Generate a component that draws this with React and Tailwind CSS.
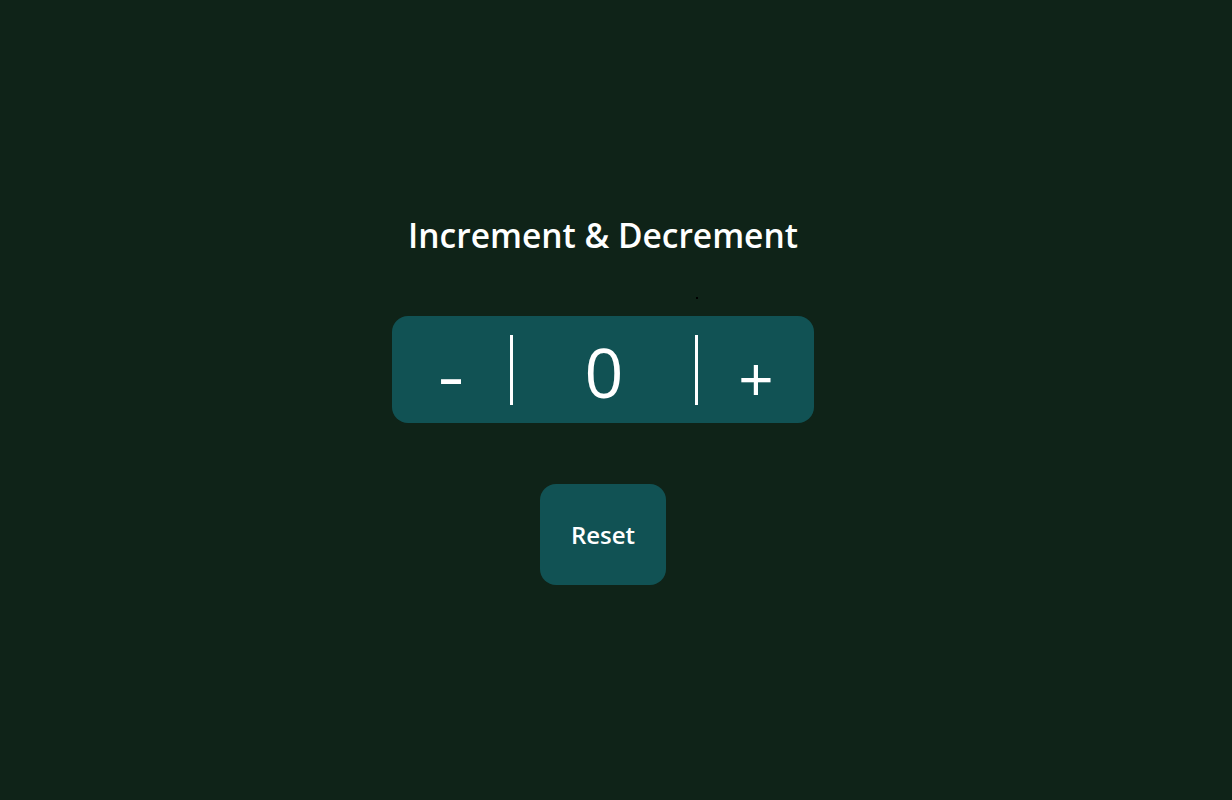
import React, { useState } from 'react';

export default function App() {
    const [count, setCount] = useState(0);

    return (
        <div
            className="relative min-h-screen w-full bg-[#0f2318] flex flex-col items-center justify-center text-white pr-[26px]"
            style={{ fontFamily: '"Segoe UI", "Open Sans", "Noto Sans", sans-serif' }}
        >
            <h1 className="text-[33.5px] leading-[40px] font-semibold">Increment &amp; Decrement</h1>

            {/* stray dot from the original page */}
            <div className="relative w-0 h-0">
                <span className="absolute left-[93px] top-[42px] w-[2px] h-[2px] bg-black" />
            </div>

            <div className="mt-[61px] w-[422px] h-[107px] rounded-2xl bg-[#115254] flex items-center">
                <button
                    onClick={() => setCount(count - 1)}
                    className="w-[118px] h-full flex items-center justify-center text-[66px] leading-none pt-[6px] scale-x-125"
                >
                    -
                </button>
                <div className="w-[3px] h-[70px] bg-white" />
                <div className="w-[182px] h-full flex items-center justify-center text-[68px] leading-none pt-[4px]">
                    {count}
                </div>
                <div className="w-[3px] h-[70px] bg-white" />
                <button
                    onClick={() => setCount(count + 1)}
                    className="w-[116px] h-full flex items-center justify-center text-[62px] leading-none pt-[16px]"
                >
                    +
                </button>
            </div>

            <button
                onClick={() => setCount(0)}
                className="mt-[61px] w-[126px] h-[101px] rounded-2xl bg-[#115254] text-[24px] font-semibold"
            >
                Reset
            </button>
        </div>
    );
}
